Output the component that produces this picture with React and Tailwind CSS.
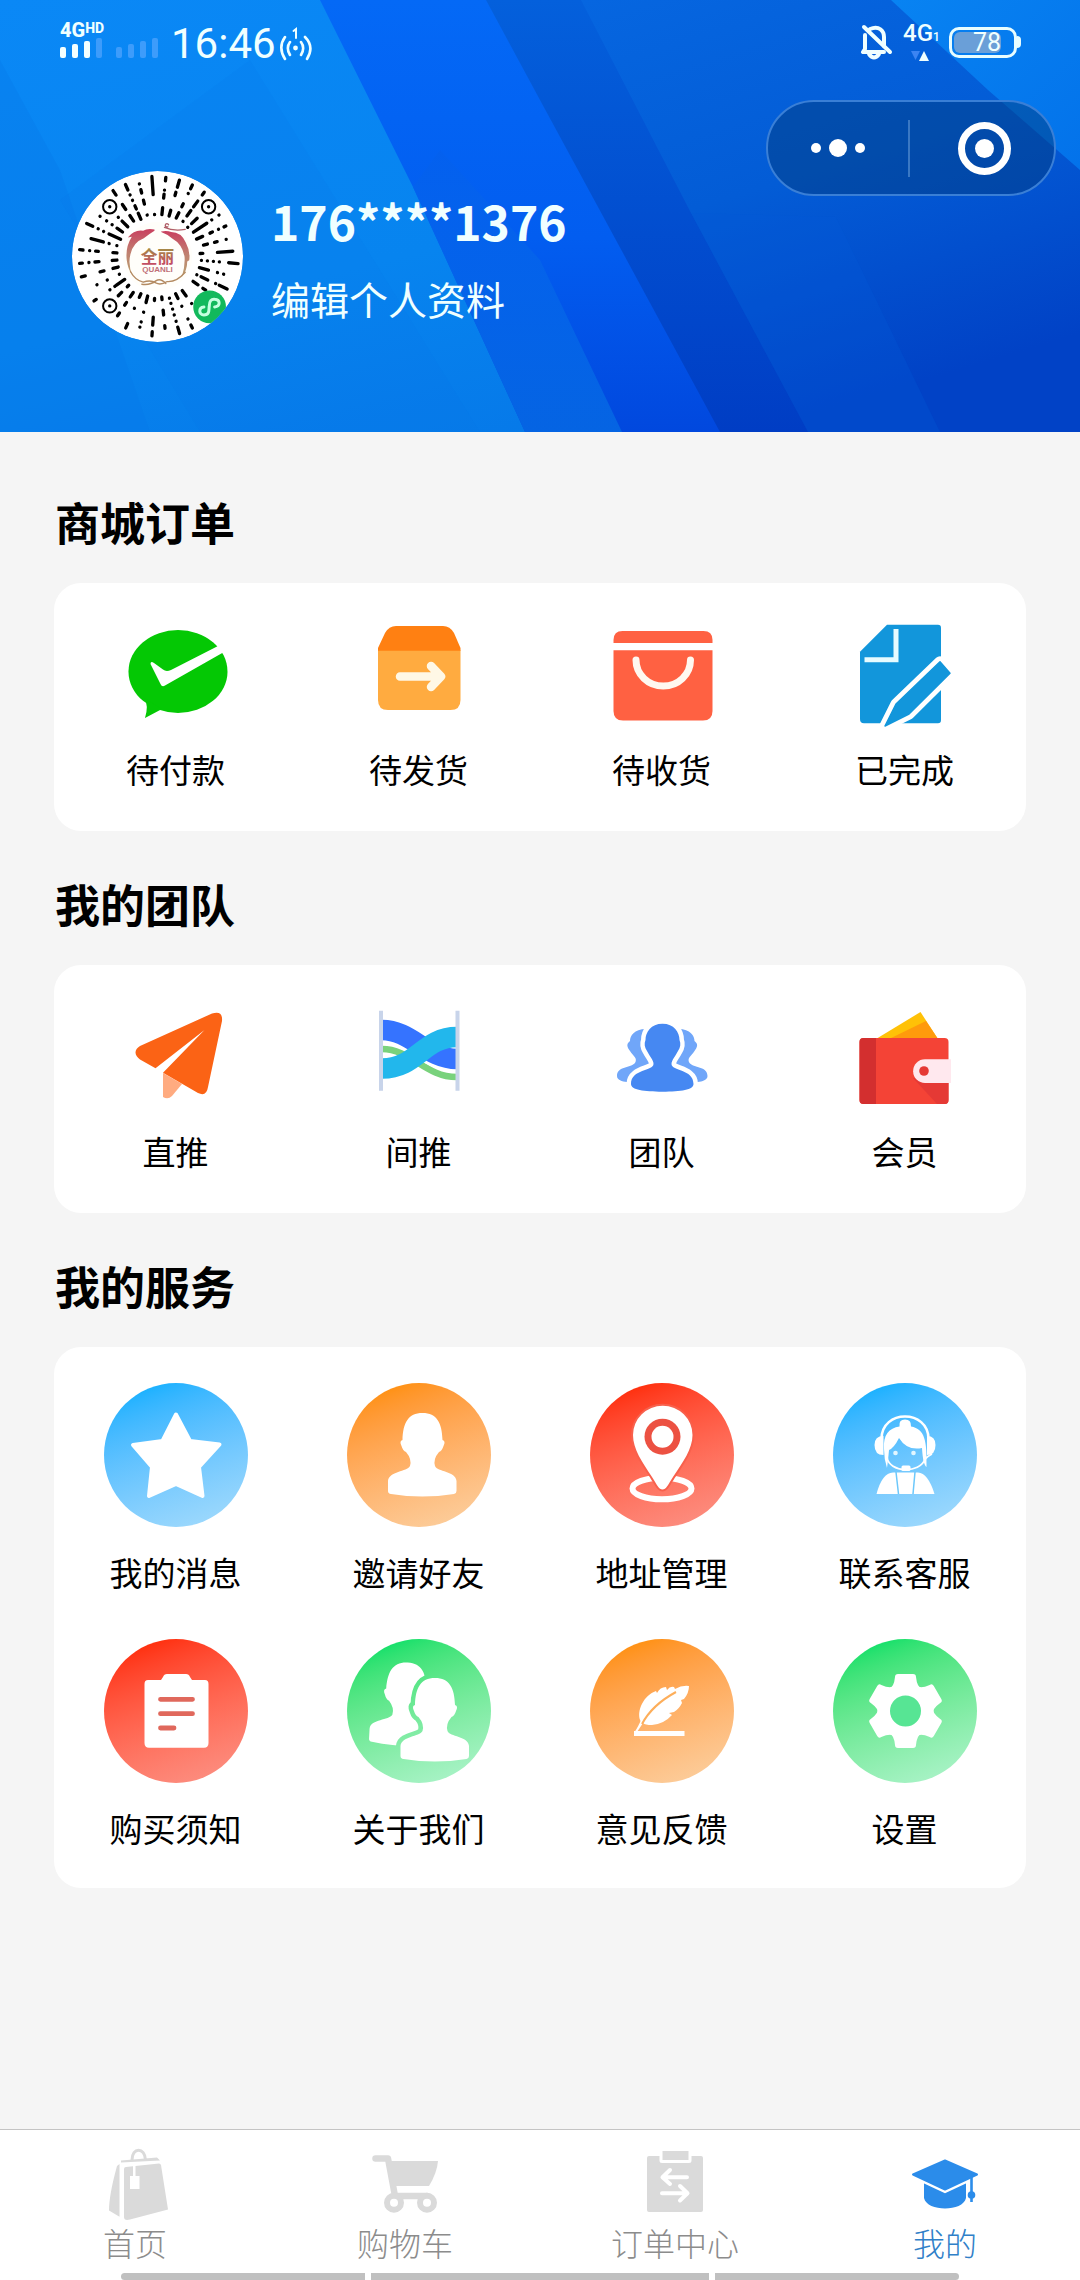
import React from "react";

const PERSON =
  "M75.5 30 C61 30 56 40 55.5 57 Q52 58 54.5 63 Q56 68 59 69 Q65 76 63 83 C60 89 42 88 41 98 L41 108 Q41 110.5 44 111 Q75 116 107 111 Q109.5 110.5 109.5 108 L109.5 98 C109 88 90 89 88 83 Q86 76 92 69 Q95 68 96.5 63 Q99 58 95.5 57 C95 40 90 30 75.5 30Z";

/* ---------- header ---------- */

function HeaderBackdrop() {
  return (
    <svg className="absolute inset-0 h-full w-full" viewBox="0 0 1080 432" preserveAspectRatio="none" aria-hidden="true">
      <defs>
        <linearGradient id="hb-left" x1="0" y1="0" x2="0.6" y2="1">
          <stop offset="0" stopColor="#0a88f6" />
          <stop offset="0.6" stopColor="#0784ef" />
          <stop offset="1" stopColor="#0678e8" />
        </linearGradient>
        <linearGradient id="hb-band" x1="0" y1="0" x2="0" y2="1">
          <stop offset="0" stopColor="#0469f6" />
          <stop offset="0.55" stopColor="#025df0" />
          <stop offset="1" stopColor="#0148de" />
        </linearGradient>
        <linearGradient id="hb-right" x1="0" y1="0" x2="0.35" y2="1">
          <stop offset="0" stopColor="#0666e0" />
          <stop offset="0.5" stopColor="#035cd6" />
          <stop offset="1" stopColor="#0142c6" />
        </linearGradient>
        <linearGradient id="hb-deep" x1="0" y1="0" x2="0" y2="1">
          <stop offset="0" stopColor="#0460dc" />
          <stop offset="1" stopColor="#003dc4" />
        </linearGradient>
        <linearGradient id="hb-low" x1="0" y1="0" x2="0" y2="1">
          <stop offset="0" stopColor="#0460ee" />
          <stop offset="1" stopColor="#066be4" />
        </linearGradient>
        <linearGradient id="hb-corner" x1="0" y1="0" x2="1" y2="1">
          <stop offset="0" stopColor="#0883f2" />
          <stop offset="1" stopColor="#0372ea" />
        </linearGradient>
      </defs>
      <rect width="1080" height="432" fill="url(#hb-left)" />
      <path d="M0 60 L60 170 L150 432 L0 432Z" fill="#0676e8" opacity="0.3" />
      <path d="M250 60 L480 432 L200 432 L60 200Z" fill="#0676e8" opacity="0.12" />
      <path d="M320 0 L413 187 L525 432 L1080 432 L1080 0Z" fill="url(#hb-band)" />
      <path d="M413 187 L525 432 L622 432 L540 260 L440 150Z" fill="url(#hb-low)" opacity="0.8" />
      <path d="M486 0 L540 100 L720 432 L1080 432 L1080 0Z" fill="url(#hb-deep)" />
      <path d="M581 0 L691 213 L808 432 L1080 432 L1080 0Z" fill="url(#hb-right)" />
      <path d="M836 217 L940 432 L808 432 L691 213Z" fill="#0459d6" opacity="0.3" />
      <path d="M891 0 L988 90 L1080 170 L1080 0Z" fill="url(#hb-corner)" />
    </svg>
  );
}

function SignalBars({ levels }) {
  return (
    <svg className="h-5 w-[43px]" viewBox="0 0 43 20" aria-hidden="true">
      {levels.map((on, i) => (
        <rect key={i} x={i * 12} y={9 - i * 3} width="6" height={11 + i * 3} rx="2" fill={on ? "#f3ffff" : "#3d9cfb"} />
      ))}
    </svg>
  );
}

function StatusBar() {
  return (
    <div className="relative flex h-[88px] items-center justify-between pr-[59px] pl-[60px] font-[Roboto,sans-serif] text-[#f0ffff]">
      <div className="flex items-center">
        <div className="flex flex-col pb-2">
          <div className="flex h-4 items-start text-[20px] leading-4 font-extrabold">
            4G<span className="text-[14px] leading-3">HD</span>
          </div>
          <div className="flex gap-[13px]">
            <SignalBars levels={[true, true, true, false]} />
            <SignalBars levels={[false, false, false, false]} />
          </div>
        </div>
        <span className="ml-3 text-[42px] leading-[48px]">16:46</span>
        <svg className="ml-0.5 h-9 w-9" viewBox="0 0 36 36" fill="none" stroke="#f0ffff" strokeWidth="2.6" strokeLinecap="round" aria-hidden="true">
          <path d="M7 11 C2 18 2 25 7 33 M12 16 C9 20 9 24 12 29 M27 11 C34 18 34 25 29 33 M23 16 C26 20 26 24 23 29" />
          <circle cx="17.5" cy="22" r="2.4" fill="#f0ffff" stroke="none" />
          <path d="M15.5 5 L18 3 V12" strokeWidth="2" />
        </svg>
      </div>
      <div className="flex items-center pb-1">
        <svg className="h-9 w-[34px]" viewBox="0 0 34 36" fill="none" stroke="#f0ffff" strokeWidth="4" strokeLinecap="round" strokeLinejoin="round" aria-hidden="true">
          <path d="M6 11 V25 L4 28 H25 M11 5 C20 1 25 7 25 13 V22" />
          <path d="M5 3 L31 28" />
          <path d="M10 30 Q15 37 20 30" />
        </svg>
        <div className="ml-2.5 flex w-9 flex-col">
          <span className="flex items-baseline text-[24px] leading-5 font-medium">
            4G<span className="text-[12px]">1</span>
          </span>
          <svg className="mt-1 h-2.5 w-9" viewBox="0 0 36 10" aria-hidden="true">
            <path d="M8 0 H17 L12.5 9Z" fill="#3c84f2" />
            <path d="M16 10 H26 L21 0Z" fill="#f0ffff" />
          </svg>
        </div>
        <div className="ml-2.5 flex items-center">
          <div className="flex h-[31px] w-[68px] items-center rounded-[10px] border-[3px] border-[#e8fdff] p-0.5">
            <div className="flex h-full w-[47px] items-center justify-end rounded-[6px] bg-[#6a9fd8] text-[25px] leading-none text-[#f0ffff]">78</div>
          </div>
          <div className="h-3 w-1 rounded-r-full bg-[#e8fdff]" />
        </div>
      </div>
    </div>
  );
}

/* Mini-program code: each ray is [angle, radial segments]; equal radii give a dot. */
const RAYS = [
  [-4, [[240, 186], [126, 126]]],
  [6, [[238, 228], [200, 200], [188, 176], [147, 126]]],
  [16, [[238, 216], [200, 190], [144, 126]]],
  [26, [[238, 226], [210, 210], [176, 166], [146, 128]]],
  [36, [[238, 228], [205, 184], [170, 150], [130, 130]]],
  [46, [[165, 142], [126, 126]]],
  [56, [[222, 222], [196, 196], [178, 130]]],
  [66, [[224, 218], [200, 200], [180, 172], [148, 128]]],
  [76, [[212, 212], [184, 176], [154, 142]]],
  [86, [[226, 180], [136, 128]]],
  [95, [[242, 214], [186, 186], [168, 168], [150, 150], [132, 132]]],
  [105, [[205, 205], [186, 186], [158, 130]]],
  [115, [[230, 204], [192, 192], [166, 144], [130, 130]]],
  [125, [[176, 166], [148, 130]]],
  [144, [[174, 174], [146, 126]]],
  [154, [[238, 228], [208, 208], [166, 166], [140, 124]]],
  [164, [[240, 220], [202, 202], [182, 182], [164, 164], [146, 146], [130, 130]]],
  [174, [[216, 208], [176, 162], [130, 122]]],
  [184, [[238, 226], [206, 182], [132, 126]]],
  [194, [[218, 218], [202, 202], [172, 172], [142, 122]]],
  [204, [[234, 220], [170, 170], [134, 122]]],
  [214, [[214, 204], [176, 166], [146, 130]]],
  [225, [[166, 152], [128, 122]]],
  [235, [[232, 224], [174, 174], [156, 156], [150, 120]]],
  [245, [[200, 200], [166, 166], [126, 126]]],
  [255, [[236, 224], [178, 166], [138, 122]]],
  [265, [[234, 226], [206, 206], [188, 176], [136, 122]]],
  [275, [[234, 224], [204, 204], [186, 178], [134, 122]]],
  [285, [[206, 168], [150, 150], [126, 126]]],
  [295, [[234, 214], [196, 196], [178, 178], [160, 122]]],
  [305, [[210, 210], [186, 186], [166, 166], [148, 128]]],
  [315, [[166, 166], [150, 126]]],
  [326, [[238, 222], [188, 170], [148, 128]]],
  [336, [[236, 218], [202, 202], [184, 184], [166, 156], [142, 122]]],
  [346, [[224, 224], [206, 196], [174, 162], [128, 128]]],
];

function Avatar() {
  return (
    <svg className="h-[171px] w-[171px] shrink-0" viewBox="37 33 512 512" role="img" aria-label="头像">
      <defs>
        <clipPath id="av-clip">
          <circle cx="293" cy="289" r="256" />
        </clipPath>
        <linearGradient id="av-logo" x1="0" y1="0" x2="0" y2="1">
          <stop offset="0" stopColor="#c9405f" />
          <stop offset="0.5" stopColor="#c08070" />
          <stop offset="1" stopColor="#b9a070" />
        </linearGradient>
        <linearGradient id="av-text" x1="0" y1="0" x2="0" y2="1">
          <stop offset="0.2" stopColor="#a58a45" />
          <stop offset="0.8" stopColor="#c24e62" />
        </linearGradient>
      </defs>
      <g clipPath="url(#av-clip)">
        <circle cx="293" cy="289" r="256" fill="#fff" />
        <g stroke="#000" strokeWidth="10" strokeLinecap="round">
          {RAYS.map(([a, segs]) =>
            segs.map(([r1, r2], i) => (
              <line key={a + "-" + i} x1="293" x2="293" y1={289 - r1} y2={289 - r2 + 0.1} transform={`rotate(${a} 293 289)`} />
            ))
          )}
        </g>
        {[[150, 140], [446, 140], [150, 437]].map(([x, y]) => (
          <g key={x + "-" + y}>
            <circle cx={x} cy={y} r="26" fill="#fff" />
            <circle cx={x} cy={y} r="20" fill="#fff" stroke="#000" strokeWidth="6" />
            <circle cx={x} cy={y} r="5" />
          </g>
        ))}
        <circle cx="293" cy="289" r="104" fill="#fffefa" />
        <g fill="url(#av-logo)">
          <path d="M284 208 Q262 204 250 212 Q224 208 204 232 L216 230 Q196 262 201 300 Q204 326 218 346 Q204 312 212 282 Q220 246 252 234 Q268 222 284 212Z" />
          <path d="M304 214 Q322 210 334 216 Q364 216 378 248 Q392 274 388 300 L382 304 Q382 330 366 350 Q376 318 374 290 Q368 252 336 234 Q320 222 304 216Z" />
        </g>
        <g fill="none" stroke="#b48b62" strokeWidth="4" strokeLinecap="round">
          <path d="M314 202 Q340 214 376 208 M324 200 a5 5 0 1 1 2 -6" stroke="#b0606a" />
          <path d="M212 334 Q226 360 250 366 Q272 358 288 368 Q302 376 322 364 Q350 366 376 336" />
          <path d="M246 372 Q270 376 288 362 Q302 352 318 370" />
        </g>
        <text x="293" y="308" textAnchor="middle" fontSize="50" fontWeight="700" fontFamily="'Noto Sans CJK SC', sans-serif" fill="url(#av-text)">全丽</text>
        <text x="293" y="334" textAnchor="middle" fontSize="24" fontWeight="700" fontFamily="'Liberation Sans', sans-serif" fill="#c07078">QUANLI</text>
        <circle cx="449" cy="440" r="49" fill="#12b95c" />
        <path d="M432 440 C415 442 416 464 432 464 C450 464 446 450 448 438 C448 422 454 416 464 417 C482 418 482 438 464 440" fill="none" stroke="#c5ffe0" strokeWidth="9" strokeLinecap="round" />
      </g>
    </svg>
  );
}

function Header() {
  return (
    <header className="relative h-[432px] shrink-0 overflow-hidden">
      <HeaderBackdrop />
      <StatusBar />
      <div className="absolute top-[100px] right-6 flex h-24 w-[290px] items-center rounded-full border-2 border-[#3a7fd6] bg-[#003878]/45">
        <button type="button" aria-label="更多" className="flex flex-1 items-center justify-center gap-2">
          <span className="h-2.5 w-2.5 rounded-full bg-white" />
          <span className="h-[18px] w-[18px] rounded-full bg-white" />
          <span className="h-2.5 w-2.5 rounded-full bg-white" />
        </button>
        <span className="h-[57px] w-0.5 bg-[#3a78c4]" />
        <button type="button" aria-label="关闭" className="flex flex-1 items-center justify-center pl-1">
          <span className="flex h-[53px] w-[53px] items-center justify-center rounded-full border-[7px] border-white">
            <span className="h-[19px] w-[19px] rounded-full bg-white" />
          </span>
        </button>
      </div>
      <div className="relative mt-[83px] flex items-center gap-7 pl-[72px]">
        <Avatar />
        <div className="flex flex-col items-start gap-[18px] text-[#f0ffff]">
          <span className="text-[48px] leading-[64px] font-bold">176****1376</span>
          <button type="button" className="text-[39px] leading-[56px]">编辑个人资料</button>
        </div>
      </div>
    </header>
  );
}

/* ---------- flat icons (108 x 108) ---------- */

const PayIcon = (
  <>
    <ellipse cx="56" cy="49.5" rx="49.5" ry="41.5" fill="#04c804" />
    <path d="M22 76 Q27 83 23 96 L40 87Z" fill="#04c804" />
    <path d="M28.5 42 Q28.5 38.500 32 41 L41 47.5 Q44 50 49 48 L96 24 L102 30 L43 63.5 Q40 65.5 38.5 62Z" fill="#fff" />
  </>
);

const ShipIcon = (
  <>
    <path d="M13 28 H95.5 V78 Q95.5 88 85.5 88 H23 Q13 88 13 78Z" fill="#ffab40" />
    <path d="M13 28.7 L13 26 L20 11 Q24 4 31 4 H78 Q85 4 89 11 L95.5 26 V28.7Z" fill="#ff8012" />
    <path d="M35 54.5 H72 M66 44 L76 54.5 L66 65" fill="none" stroke="#fff8e6" strokeWidth="8.5" strokeLinecap="round" strokeLinejoin="round" />
    <path d="M66 46 L76 54.5 L66 63Z" fill="#fff8e6" />
  </>
);

const ReceiveIcon = (
  <>
    <path d="M5.5 21 V18 Q5.5 9 14.5 9 H95.5 Q104.5 9 104.5 18 V21Z" fill="#ff6142" />
    <path d="M5.5 28.3 H104.5 V89 Q104.5 98.5 95 98.5 H15 Q5.5 98.5 5.5 89Z" fill="#ff6142" />
    <path d="M28 38 A27.2 26 0 0 0 82.5 38" fill="none" stroke="#fff8f0" strokeWidth="7" strokeLinecap="round" />
  </>
);

const DoneIcon = (
  <>
    <path d="M36 2.7 H87 Q90 2.7 90 6 V98 Q90 101.3 87 101.3 H13 Q9 101.3 9 97 V29.7Z" fill="#1296db" />
    <path d="M45 7 V37.7 H13.5" fill="none" stroke="#e6fbff" strokeWidth="5" />
    <path d="M34 104 L45 82 L89 39.7 L99 51.3 L58 92Z" fill="#1296db" stroke="#fff" strokeWidth="11" strokeLinejoin="round" />
    <path d="M34 104 L45 82 L89 39.7 L99 51.3 L58 92Z" fill="#1296db" stroke="#1296db" strokeWidth="1.5" strokeLinejoin="round" />
  </>
);

const DirectIcon = (
  <>
    <path d="M41 69 L60 80 L50 92 Q46 96 41 93Z" fill="#ffab80" />
    <path d="M18 42 L90 9.5 Q101 6 100 17 L86 83 Q84.5 93 76 89 L41 68.7 L82.5 26 L33.5 64.3 L18 55.5 Q9 48 18 42Z" fill="#fb6315" />
  </>
);

const IndirectIcon = (
  <>
    <path d="M17 45 C46 45 60 73 92 73" fill="none" stroke="#79d27c" strokeWidth="6.5" />
    <path d="M17 26 C46 26 62 55 92 55" fill="none" stroke="#fff" strokeWidth="26" />
    <path d="M17 26 C46 26 62 55 92 55" fill="none" stroke="#3573ff" strokeWidth="20.5" />
    <path d="M17 64.5 C52 64.5 58 33 92 33" fill="none" stroke="#22b7ec" strokeWidth="20.5" />
    <path d="M14 6.7 H18 V86.7 H14Z M90.5 6.7 H94.5 V86.7 H90.5Z" fill="#c8d4ea" />
  </>
);

const TEAM_SIDE =
  "M38 25 C26 25 22 32 22 37 C18 40 19 43 22 47 C25 52 30 54 27 59 C23 64 9 62 9 72 C9 76 14 77.5 19 78 L45 70 L45 30Z";
const TeamIcon = (
  <>
    <path d={TEAM_SIDE} fill="#70a6f9" />
    <path d={TEAM_SIDE} fill="#70a6f9" transform="translate(108.5 0) scale(-1 1)" />
    <path
      d="M54.5 19.7 C43 19.7 37.5 28 37.5 36 C36 40 36.5 43 39 47 C42 53 45.5 56 45.5 60 C45.5 67 23 65 23 80 C23 86 36 87.7 54.5 87.7 C73 87.7 85.5 86 85.5 80 C85.5 65 63.5 67 63.5 60 C63.5 56 67 53 70 47 C72.5 43 73 40 71.5 36 C71.5 28 66 19.7 54.5 19.7Z"
      fill="#4688f2"
      stroke="#fff"
      strokeWidth="9"
      paintOrder="stroke"
    />
  </>
);

const MemberIcon = (
  <>
    <path d="M25 35 L69.5 8 L87 35Z" fill="#ffc107" />
    <path d="M38 35 L75 17 L87 35Z" fill="#ff9a0c" />
    <rect x="8.5" y="34" width="89" height="66" rx="4" fill="#f44336" />
    <path d="M62 74 L86 100 H94 Q97.5 100 97.5 96 V74Z" fill="#e53935" />
    <path d="M25 34 H12.5 Q8.5 34 8.5 38 V96 Q8.5 100 12.5 100 H25Z" fill="#d32f2f" />
    <path d="M100 55.3 H74 A11.8 11.8 0 0 0 74 79 H100Z" fill="#ffe8ee" />
    <circle cx="73" cy="67" r="4.8" fill="#e53935" />
  </>
);

/* ---------- glyphs for round icons (144 x 144) ---------- */

const StarGlyph = (
  <path
    d="M72 31.5 L86 58 L115.5 61.5 L95 84 L98.5 113 L72 101 L45 113 L48 84 L29 62 L58.5 58Z"
    fill="#fff"
    stroke="#fff"
    strokeWidth="4"
    strokeLinejoin="round"
  />
);

const InviteGlyph = <path d={PERSON} fill="#fff" />;

const PinGlyph = (
  <>
    <ellipse cx="72" cy="105.5" rx="29.5" ry="10.8" fill="none" stroke="#fff" strokeWidth="6" />
    <path
      d="M72.5 106.5 C69 106.5 67 102 62 94 C52 79 43 66 43 52 A29.5 29 0 0 1 102.5 52 C102.5 66 93 79 83 94 C78 102 76 106.5 72.5 106.5Z"
      fill="#fff"
      stroke="#f8604c"
      strokeWidth="4"
      paintOrder="stroke"
    />
    <circle cx="72.5" cy="53.7" r="18" fill="#ec5142" />
    <circle cx="72.5" cy="53.7" r="11" fill="#fff" />
  </>
);

const ServiceGlyph = (
  <>
    <path d="M48.5 56 C48.5 26 95.5 26 95.5 56" fill="none" stroke="#fff" strokeWidth="2.6" />
    <path d="M50.5 53 Q41.5 53 41.5 62 Q41.5 72 50.5 72Z M94 53 Q102.5 53 102.5 62 Q102.5 72 94 72Z" fill="#fff" />
    <path d="M72 36.5 Q78.5 36.5 78 43.5 C92 46 94 58 93.5 84 Q90 82 89 65 Q74 68 66 55 Q61 65 56 67 Q55 78 54 85 Q51 76 51 66 C50 52 56 45 66.5 43.5 Q65.5 36.5 72 36.5Z" fill="#fff" />
    <circle cx="62.5" cy="70" r="2.3" fill="#e2f6ff" />
    <circle cx="80.5" cy="70" r="2.3" fill="#e2f6ff" />
    <path d="M54 74 C56 90 87 91 92 76 Q95 73 99 71" fill="none" stroke="#fff" strokeWidth="1.8" />
    <rect x="68.5" y="82.5" width="9" height="5.5" rx="1.5" fill="#fff" />
    <path d="M43.5 111 Q49 90 60 89.5 H85 Q95 90 101.5 111Z" fill="#fff" />
    <path d="M63 89 L65.5 111 M82 89 L80 111" stroke="#6cc8fb" strokeWidth="1.5" />
  </>
);

const NoticeGlyph = (
  <>
    <path d="M44 41 H57 L59 38 Q60 35 63 35 H82 Q85 35 86 38 L88 41 H101 Q104.5 41 104.5 45 V104 Q104.5 108.7 100 108.7 H45 Q40.5 108.7 40.5 104 V45 Q40.5 41 44 41Z" fill="#fff" />
    <path d="M56.5 60.3 H88.5 M56.5 74.7 H88.5 M56.5 89 H70" stroke="#e0685c" strokeWidth="4.8" strokeLinecap="round" />
  </>
);

const AboutGlyph = (
  <>
    <mask id="about-gap" maskUnits="userSpaceOnUse" x="0" y="0" width="144" height="144">
      <rect width="144" height="144" fill="#fff" />
      <path d={PERSON} fill="#000" stroke="#000" strokeWidth="9" transform="translate(12.5 9)" />
    </mask>
    <g mask="url(#about-gap)">
      <path d={PERSON} fill="#fff" transform="translate(-17 -6.5) rotate(3 75 70)" />
    </g>
    <path d={PERSON} fill="#fff" transform="translate(12.5 9)" />
  </>
);

const FeedbackGlyph = (
  <>
    <path d="M45 92.5 Q49 86 50.5 82 C46 72 54 56 66 52 L67 54 Q70 48 76 48 L77 51 Q80 47 84 48 L85 50 Q92 46 99 47 Q99 54 94 60 L91 61 L92 64 Q89 70 84 73 L79 74 L82 76 Q74 85 62 86 Q55 86 53 84 L47 93Z" fill="#fff" />
    <path d="M52 85 Q62 66 86 53" fill="none" stroke="#fdae5a" strokeWidth="2" />
    <path d="M44 92 H94.5 V97 H44Z" fill="#fff" />
  </>
);

const SettingsGlyph = (
  <>
    <circle cx="72.5" cy="72" r="28" fill="#fff" />
    {[0, 60, 120, 180, 240, 300].map((a) => (
      <path key={a} d="M56 50 Q61 48 62 38 Q62 35 65 35 H80 Q83 35 83 38 Q84 48 89 50Z" fill="#fff" transform={`rotate(${a} 72.5 72)`} />
    ))}
    <circle cx="72.5" cy="72" r="15.5" fill="#57e594" />
  </>
);

/* ---------- tab icons (76 x 76) ---------- */

const HomeTab = (
  <>
    <path d="M27 24 Q27 22 29 22 L62 18.500 Q63.5 18.500 64 20 L71 64.5 L33 74.5 Q27 76 27 72Z M22.5 19 V71.7 L12 65.5 Q12 50 20 21Z M24 17.5 V15.5 L60 12.5 L63 15.5Z" fill="#dadada" />
    <path d="M35 15 C35 2 48 2 48.5 15" fill="none" stroke="#dadada" strokeWidth="3" />
    <path d="M33 31 H36 V19 H38.5 V31 H42.5 V44 H33Z" fill="#fff" />
  </>
);

const CartTab = (
  <>
    <path d="M8.5 13.5 H21 L28 51 H60" fill="none" stroke="#dadada" strokeWidth="6.5" strokeLinecap="round" strokeLinejoin="round" />
    <path d="M23 16 H71 Q70 28 62 41 H28Z" fill="#dadada" />
    <circle cx="27" cy="57.7" r="7" fill="#fff" stroke="#dadada" strokeWidth="6" />
    <circle cx="60" cy="57.7" r="7" fill="#fff" stroke="#dadada" strokeWidth="6" />
  </>
);

const OrderTab = (
  <>
    <rect x="10" y="11" width="56" height="56" rx="2" fill="#dadada" />
    <rect x="24" y="4.5" width="29" height="12" rx="1" fill="#dadada" stroke="#fff" strokeWidth="3" />
    <path d="M50 32.3 H26 M33 25 L25.5 32.3 L33 39 M25 48.3 H50 M43 41 L50.5 48.3 L43 55.5" fill="none" stroke="#fff" strokeWidth="4" strokeLinecap="round" strokeLinejoin="round" />
  </>
);

const MineTab = (
  <>
    <path d="M17 35 V53 C20 67 56 67 59 53 V35Z" fill="#2b8cea" />
    <path d="M6 29.5 L38 15.5 L70 29.5 L38 44.5Z" fill="#2b8cea" stroke="#fff" strokeWidth="7" paintOrder="stroke" />
    <path d="M6 29.5 L38 15.5 L70 29.5 L38 44.5Z" fill="#2b8cea" stroke="#2b8cea" strokeWidth="2" strokeLinejoin="round" />
    <path d="M64.5 31 V57" stroke="#2b8cea" strokeWidth="2.6" />
    <circle cx="64.5" cy="50" r="3.8" fill="#2b8cea" />
  </>
);

/* ---------- sections ---------- */

function Section({ title, children }) {
  return (
    <section>
      <h2 className="mb-7 pl-px text-[45px] leading-[66px] font-bold">{title}</h2>
      {children}
    </section>
  );
}

function FlatCard({ items }) {
  return (
    <div className="grid grid-cols-4 rounded-[27px] bg-white pt-[39px] pb-[39px]">
      {items.map(([label, icon]) => (
        <button key={label} type="button" className="flex flex-col items-center gap-4">
          <svg className="h-[108px] w-[108px]" viewBox="0 0 108 108" aria-hidden="true">{icon}</svg>
          <span className="text-[33px] leading-[46px]">{label}</span>
        </button>
      ))}
    </div>
  );
}

const BLUE = "from-[#18b1ff] to-[#a6dcfc]";
const ORANGE = "from-[#ff910f] to-[#fbd2a4]";
const RED = "from-[#ff2f0a] to-[#fb9488]";
const GREEN = "from-[#0fe06a] to-[#b2f4cf]";

const ORDERS = [["待付款", PayIcon], ["待发货", ShipIcon], ["待收货", ReceiveIcon], ["已完成", DoneIcon]];
const TEAM = [["直推", DirectIcon], ["间推", IndirectIcon], ["团队", TeamIcon], ["会员", MemberIcon]];
const SERVICES = [
  ["我的消息", BLUE, StarGlyph],
  ["邀请好友", ORANGE, InviteGlyph],
  ["地址管理", RED, PinGlyph],
  ["联系客服", BLUE, ServiceGlyph],
  ["购买须知", RED, NoticeGlyph],
  ["关于我们", GREEN, AboutGlyph],
  ["意见反馈", ORANGE, FeedbackGlyph],
  ["设置", GREEN, SettingsGlyph],
];
const TABS = [["首页", HomeTab], ["购物车", CartTab], ["订单中心", OrderTab], ["我的", MineTab]];

function TabBar() {
  return (
    <nav className="mt-auto border-t border-[#c4c4c4] bg-white pt-[15px]">
      <div className="grid grid-cols-4">
        {TABS.map(([label, icon]) => (
          <a
            key={label}
            href="#"
            aria-current={label === "我的" ? "page" : undefined}
            className="flex flex-col items-center font-light text-[#8c8c8c] aria-[current=page]:text-[#3080c8]"
          >
            <svg className="h-[76px] w-[76px]" viewBox="0 0 76 76" aria-hidden="true">{icon}</svg>
            <span className="text-[32px] leading-[42px]">{label}</span>
          </a>
        ))}
      </div>
      <div className="mt-2.5 grid grid-cols-[244fr_338fr_244fr] gap-1.5 px-[121px]">
        <div className="h-[7px] rounded-l-full bg-[#c0c0c0]" />
        <div className="h-[7px] bg-[#c0c0c0]" />
        <div className="h-[7px] rounded-r-full bg-[#c0c0c0]" />
      </div>
    </nav>
  );
}

export default function App() {
  return (
    <div className="flex min-h-screen flex-col bg-[#f5f5f5] font-['Noto_Sans_CJK_SC',sans-serif] text-black">
      <Header />
      <main className="flex flex-col gap-10 px-[54px] pt-[57px] pb-10">
        <Section title="商城订单">
          <FlatCard items={ORDERS} />
        </Section>
        <Section title="我的团队">
          <FlatCard items={TEAM} />
        </Section>
        <Section title="我的服务">
          <div className="grid grid-cols-4 gap-y-11 rounded-[27px] bg-white pt-9 pb-[37px]">
            {SERVICES.map(([label, tone, glyph]) => (
              <button key={label} type="button" className="flex flex-col items-center gap-[22px]">
                <span className={`h-36 w-36 rounded-full bg-linear-160 from-10% to-100% ${tone}`}>
                  <svg className="h-full w-full" viewBox="0 0 144 144" aria-hidden="true">{glyph}</svg>
                </span>
                <span className="text-[33px] leading-[46px]">{label}</span>
              </button>
            ))}
          </div>
        </Section>
      </main>
      <TabBar />
    </div>
  );
}
